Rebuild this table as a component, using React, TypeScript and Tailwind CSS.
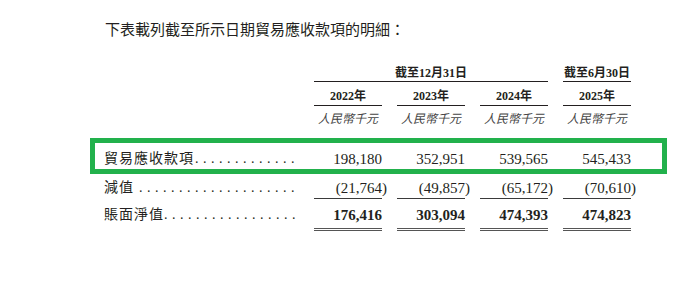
import React from "react";

const ink = "text-[#231f20]";

type RowProps = {
  label: string;
  dots: number;
  values: string[];
  bold?: boolean;
  line?: "single" | "double";
  className?: string;
};

function Amount({ v }: { v: string }) {
  // closing bracket hangs past the column edge, as in the printed report
  if (v.endsWith(")")) {
    return (
      <>
        {v.slice(0, -1)}
        <span className="mr-[-5px]">)</span>
      </>
    );
  }
  return <>{v}</>;
}

function Row({ label, dots, values, bold, line, className }: RowProps) {
  return (
    <div className={`grid grid-cols-[195px_68px_68px_68px_68px] gap-x-[15px] ${className ?? ""}`}>
      <div className="flex justify-between text-[14px] leading-[20px] h-[20px] whitespace-nowrap">
        <span className="tracking-[1px]">{label}</span>
        <span className="tracking-[4.5px]">{".".repeat(dots)}</span>
      </div>
      {values.map((v, i) => (
        <div
          key={i}
          className={`text-right text-[15px] leading-[20px] whitespace-nowrap ${bold ? "font-bold" : ""} ${
            line === "single"
              ? "h-[21px] border-b border-[#3a3a3a]"
              : line === "double"
              ? "h-[26px] border-b-[3px] border-double border-[#555]"
              : "h-[20px]"
          }`}
        >
          <Amount v={v} />
        </div>
      ))}
    </div>
  );
}

export default function App() {
  return (
    <div
      className={`relative w-[698px] h-[288px] overflow-hidden bg-white pl-[104px] pt-[20px] ${ink} font-['Liberation_Serif','Noto_Sans_CJK_TC',serif]`}
    >
      {/* intro line */}
      <p className="ml-px text-[15px] leading-[20px]">
        下表載列截至所示日期貿易應收款項的明細：
      </p>

      {/* column headings */}
      <div className="mt-[26px] grid grid-cols-[195px_68px_68px_68px_68px] gap-x-[15px] text-[12px]">
        <div />
        <div className="col-span-3 h-[16px] border-b border-[#231f20] text-center font-bold leading-[15px]">
          截至12月31日
        </div>
        <div className="h-[16px] border-b border-[#231f20] text-center font-bold leading-[15px]">
          截至6月30日
        </div>

        <div />
        {["2022年", "2023年", "2024年", "2025年"].map((y) => (
          <div
            key={y}
            className="h-[24px] pt-[6px] border-b border-[#231f20] text-center font-bold leading-[16px]"
          >
            {y}
          </div>
        ))}

        <div />
        {[0, 1, 2, 3].map((i) => (
          <div key={i} className="mt-[5px] text-center italic leading-[16px] text-[#444]">
            人民幣千元
          </div>
        ))}
      </div>

      {/* figures */}
      <Row
        className="mt-[22px]"
        label="貿易應收款項"
        dots={13}
        values={["198,180", "352,951", "539,565", "545,433"]}
      />
      <Row
        className="mt-[9px]"
        label="減值 "
        dots={20}
        values={["(21,764)", "(49,857)", "(65,172)", "(70,610)"]}
        line="single"
      />
      <Row
        className="mt-[6px]"
        label="賬面淨值"
        dots={17}
        values={["176,416", "303,094", "474,393", "474,823"]}
        bold
        line="double"
      />

      {/* highlight frame around the receivables row */}
      <div className="pointer-events-none absolute left-[90px] top-[138px] w-[577px] h-[36px] border-[5px] border-[#22b14c]" />
    </div>
  );
}
